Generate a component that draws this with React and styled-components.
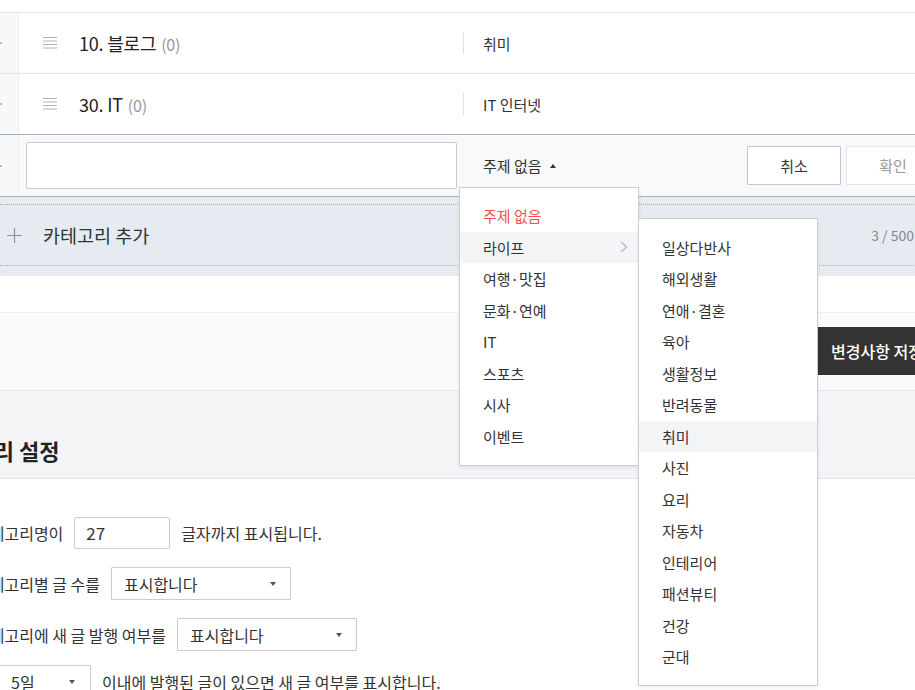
import React from "react";
import styled, { createGlobalStyle } from "styled-components";

const GlobalStyle = createGlobalStyle`
  html, body {
    margin: 0;
    padding: 0;
    background: #fff;
    overflow: hidden;
  }
  body {
    width: 915px;
    height: 690px;
    font-family: "Noto Sans CJK KR", "Noto Sans", sans-serif;
    color: #333;
  }
  * { box-sizing: border-box; }
`;

const Page = styled.div`
  width: 950px;
`;

const List = styled.div`
  margin-top: 12px;
`;

const Row = styled.div`
  display: grid;
  grid-template-columns: 19px 60px 384px 1fr;
  height: 61px;
  border-top: 1px solid #e1e4e9;
  align-items: center;
`;

const SideCell = styled.div`
  align-self: stretch;
  display: flex;
  align-items: center;
  background: #f7f8fa;
  border-right: 1px solid #eceef1;
`;

const Dot = styled.span`
  width: 2px;
  height: 2px;
  background: #b5b9bf;
`;

const HandleCell = styled.div`
  padding-left: 24px;
  display: flex;
  align-items: center;
`;

const Name = styled.div`
  font-size: 18px;
  color: #222;
  letter-spacing: -0.2px;
  white-space: nowrap;
`;

const Count = styled.span`
  font-size: 16px;
  color: #999;
  margin-left: 1px;
`;

const Topic = styled.div`
  display: flex;
  align-items: center;
  height: 22px;
  border-left: 1px solid #dcdfe4;
  padding-left: 19px;
  font-size: 15px;
  color: #333;
`;

const EditRow = styled.div`
  display: grid;
  grid-template-columns: 19px 444px 1fr auto;
  height: 63px;
  border-top: 1px solid #a9b1bc;
  border-bottom: 1px solid #a9b1bc;
  background: #f8f9fa;
  align-items: center;
`;

const InputCell = styled.div`
  padding: 0 6px 0 7px;
`;

const NameInput = styled.input`
  display: block;
  width: 100%;
  height: 47px;
  border: 1px solid #c6cbd3;
  border-radius: 2px;
  background: #fff;
  outline: none;
`;

const Picker = styled.div`
  position: relative;
  align-self: stretch;
  display: flex;
  align-items: center;
  padding-left: 20px;
  font-size: 15px;
  color: #333;
`;

const Caret = styled.span`
  width: 0;
  height: 0;
  margin-left: 8px;
  border-left: 3.5px solid transparent;
  border-right: 3.5px solid transparent;
  border-${(p) => (p.$up ? "bottom" : "top")}: 4px solid ${(p) => p.$color || "#333"};
`;

const Menu = styled.ul`
  position: absolute;
  z-index: 5;
  top: ${(p) => p.$top}px;
  left: ${(p) => p.$left};
  width: 180px;
  margin: 0;
  padding: ${(p) => p.$pad};
  list-style: none;
  background: #fff;
  border: 1px solid #c9ced6;
  box-shadow: 0 2px 4px rgba(0, 0, 0, 0.07);
`;

const MenuItem = styled.li`
  position: relative;
  display: flex;
  align-items: center;
  justify-content: space-between;
  height: 31.5px;
  padding: 0 10px 0 23px;
  font-size: 15px;
  color: ${(p) => (p.$active ? "#f4524d" : "#333")};
  background: ${(p) => (p.$hover ? "#f3f4f6" : "transparent")};
  white-space: nowrap;
`;

const Actions = styled.div`
  display: flex;
  gap: 5px;
  padding-right: 10px;
`;

const ActionButton = styled.button`
  width: 94px;
  height: 39px;
  background: #fff;
  border: 1px solid ${(p) => (p.disabled ? "#e1e4e9" : "#c3c8d0")};
  border-radius: 1px;
  font-family: inherit;
  font-size: 15px;
  color: ${(p) => (p.disabled ? "#999" : "#333")};
  padding: 0;
`;

const AddArea = styled.div`
  background: #e6ebf2;
  padding: 7px 0 10px;
`;

const AddInner = styled.div`
  display: flex;
  align-items: center;
  height: 62px;
  padding: 0 36px 0 7px;
  border-top: 1px dotted #a6adb7;
  border-bottom: 1px dotted #a6adb7;
`;

const AddLabel = styled.span`
  margin-left: 21px;
  font-size: 18.5px;
  color: #333;
`;

const Counter = styled.span`
  margin-left: auto;
  font-size: 14px;
  color: #888;
`;

const Spacer = styled.div`
  height: 37px;
  border-bottom: 1px solid #eceef2;
`;

const SaveBar = styled.div`
  display: flex;
  justify-content: flex-end;
  padding: 14px 0 15px;
  background: #f9fafb;
  border-bottom: 1px solid #e3e6ea;
`;

const SaveButton = styled.button`
  width: 132px;
  height: 48px;
  background: #333;
  border: 0;
  color: #fff;
  font-family: inherit;
  font-size: 16px;
  font-weight: 500;
  text-align: left;
  padding: 0 0 0 13px;
`;

const SettingsHead = styled.div`
  background: #f3f4f6;
  border-bottom: 1px solid #e0e4e9;
  padding: 43px 0 12px;
`;

const HeadTitle = styled.h2`
  margin: 0 0 0 -67px;
  font-size: 22px;
  font-weight: 700;
  line-height: 32px;
  color: #222;
`;

const Settings = styled.div`
  display: flex;
  flex-direction: column;
  gap: 18px;
  padding-top: 37px;
  margin-left: -25px;
`;

const SettingRow = styled.div`
  display: flex;
  align-items: center;
  gap: 11px;
  height: 33px;
  font-size: 16px;
  color: #333;
  white-space: nowrap;
  padding-left: ${(p) => (p.$sub ? "23px" : "0")};
  margin-top: ${(p) => (p.$sub ? "-4px" : "0")};
`;

const SmallInput = styled.div`
  width: 96px;
  height: 32px;
  border: 1px solid #c8cdd4;
  border-radius: 2px;
  padding-left: 11px;
  display: flex;
  align-items: center;
  font-size: 17px;
  color: #333;
`;

const Select = styled.div`
  width: ${(p) => p.$w}px;
  height: 33px;
  border: 1px solid #c8cdd4;
  border-radius: 1px;
  display: flex;
  align-items: center;
  justify-content: space-between;
  padding: 0 ${(p) => p.$right}px 0 12px;
  font-size: 16px;
  color: #333;
`;

const HandleIcon = () => (
  <svg width="14" height="12" viewBox="0 0 14 12">
    {[0.5, 4, 7.5, 11].map((y) => (
      <line key={y} x1="0" y1={y} x2="14" y2={y} stroke="#b3b3b3" strokeWidth="1" />
    ))}
  </svg>
);

const PlusIcon = () => (
  <svg width="15" height="15" viewBox="0 0 15 15">
    <path d="M7.5 0v15M0 7.5h15" stroke="#8a929c" strokeWidth="1.2" fill="none" />
  </svg>
);

const Chevron = () => (
  <svg width="8" height="12" viewBox="0 0 8 12">
    <path d="M1 1l5.5 5-5.5 5" stroke="#b9bec5" strokeWidth="1.6" fill="none" />
  </svg>
);

const topics = ["라이프", "여행·맛집", "문화·연예", "IT", "스포츠", "시사", "이벤트"];
const lifeTopics = [
  "일상다반사",
  "해외생활",
  "연애·결혼",
  "육아",
  "생활정보",
  "반려동물",
  "취미",
  "사진",
  "요리",
  "자동차",
  "인테리어",
  "패션뷰티",
  "건강",
  "군대",
];

const categories = [
  { name: "10. 블로그", count: 0, topic: "취미" },
  { name: "30. IT", count: 0, topic: "IT 인터넷" },
];

export default function App() {
  return (
    <>
      <GlobalStyle />
      <Page>
        <List>
          {categories.map((c) => (
            <Row key={c.name}>
              <SideCell>
                <Dot />
              </SideCell>
              <HandleCell>
                <HandleIcon />
              </HandleCell>
              <Name>
                {c.name} <Count>({c.count})</Count>
              </Name>
              <Topic>{c.topic}</Topic>
            </Row>
          ))}
          <EditRow>
            <SideCell>
              <Dot />
            </SideCell>
            <InputCell>
              <NameInput />
            </InputCell>
            <Picker>
              주제 없음
              <Caret $up />
              <Menu $top={52} $left="-4px" $pad="12px 0 13px">
                <MenuItem $active>주제 없음</MenuItem>
                {topics.map((t) => (
                  <MenuItem key={t} $hover={t === "라이프"}>
                    {t}
                    {t === "라이프" && (
                      <>
                        <Chevron />
                        <Menu $top={-14} $left="100%" $pad="13px 0 12px">
                          {lifeTopics.map((s) => (
                            <MenuItem key={s} $hover={s === "취미"}>
                              {s}
                            </MenuItem>
                          ))}
                        </Menu>
                      </>
                    )}
                  </MenuItem>
                ))}
              </Menu>
            </Picker>
            <Actions>
              <ActionButton>취소</ActionButton>
              <ActionButton disabled>확인</ActionButton>
            </Actions>
          </EditRow>
        </List>

        <AddArea>
          <AddInner>
            <PlusIcon />
            <AddLabel>카테고리 추가</AddLabel>
            <Counter>3 / 500</Counter>
          </AddInner>
        </AddArea>

        <Spacer />

        <SaveBar>
          <SaveButton>변경사항 저장</SaveButton>
        </SaveBar>

        <SettingsHead>
          <HeadTitle>카테고리 설정</HeadTitle>
        </SettingsHead>

        <Settings>
          <SettingRow>
            카테고리명이
            <SmallInput>27</SmallInput>
            글자까지 표시됩니다.
          </SettingRow>
          <SettingRow>
            카테고리별 글 수를
            <Select $w={180} $right={14}>
              표시합니다
              <Caret $color="#555" />
            </Select>
          </SettingRow>
          <SettingRow>
            카테고리에 새 글 발행 여부를
            <Select $w={180} $right={14}>
              표시합니다
              <Caret $color="#555" />
            </Select>
          </SettingRow>
          <SettingRow $sub>
            <Select $w={93} $right={15}>
              5일
              <Caret $color="#555" />
            </Select>
            이내에 발행된 글이 있으면 새 글 여부를 표시합니다.
          </SettingRow>
        </Settings>
      </Page>
    </>
  );
}
